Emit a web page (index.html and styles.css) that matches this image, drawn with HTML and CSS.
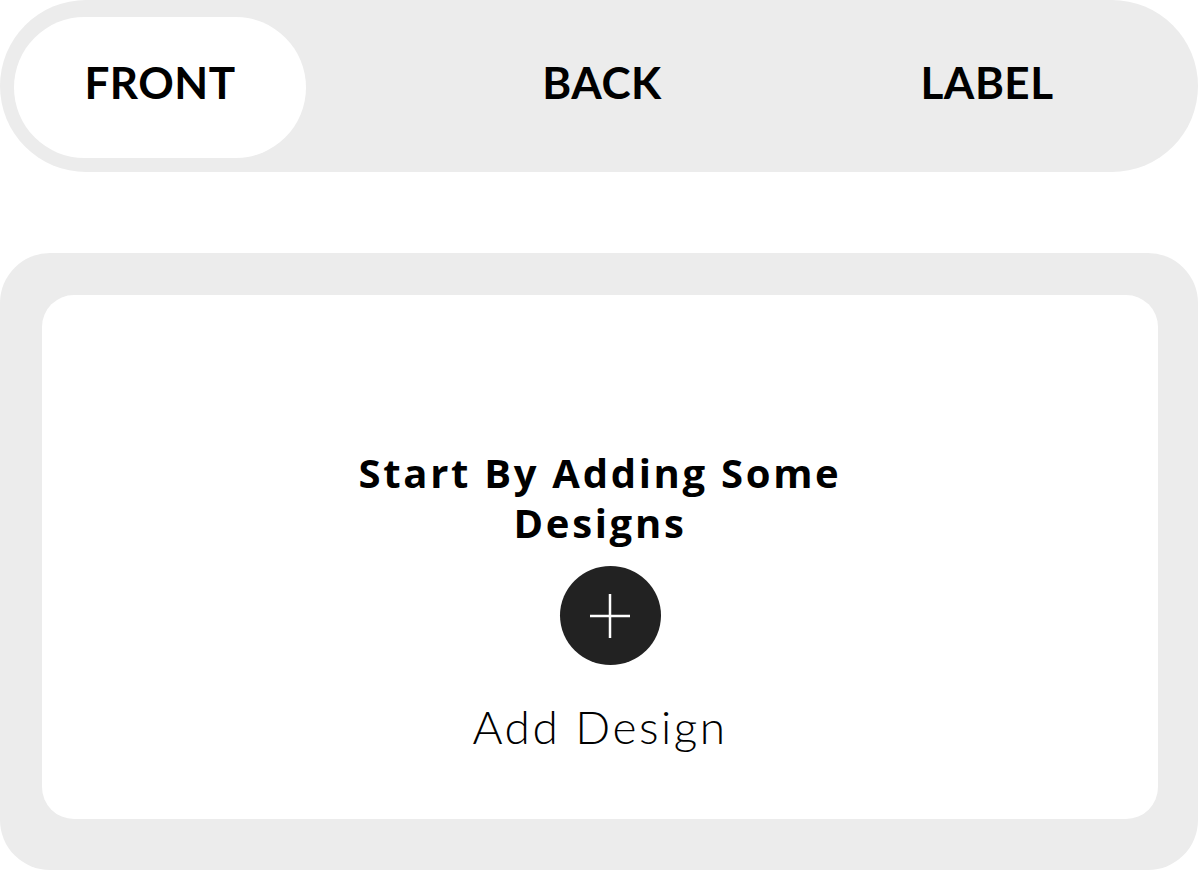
FILE: index.html
```html
<!DOCTYPE html>
<html lang="en">
<head>
<meta charset="utf-8">
<title>Designs</title>
<link rel="stylesheet" href="styles.css">
</head>
<body>
<div class="page">
  <nav class="tabs">
    <button class="tab tab-active">FRONT</button>
    <button class="tab">BACK</button>
    <button class="tab">LABEL</button>
  </nav>
  <section class="card">
    <div class="card-inner">
      <h2 class="title">Start By Adding Some Designs</h2>
      <button class="add-btn" aria-label="Add design">
        <svg width="42" height="48" viewBox="0 0 42 48" aria-hidden="true">
          <line x1="21" y1="2" x2="21" y2="46" stroke="#fff" stroke-width="2.5"/>
          <line x1="1" y1="24" x2="41" y2="24" stroke="#fff" stroke-width="2.5"/>
        </svg>
      </button>
      <div class="add-label">Add Design</div>
    </div>
  </section>
</div>
</body>
</html>
```

FILE: styles.css
```css
* { box-sizing: border-box; }
html, body { margin: 0; padding: 0; background: #fff; }
body {
  font-family: Lato, "Open Sans", "Liberation Sans", sans-serif;
  color: #000;
  width: 1200px;
  height: 872px;
  overflow: hidden;
}
.page {
  display: flex;
  flex-direction: column;
  gap: 81px;
  width: 1198px;
}
.tabs {
  height: 172px;
  background: #ececec;
  border-radius: 86px;
  padding: 17px 14px 14px;
  display: grid;
  grid-template-columns: 292px 592px 178px;
  align-items: stretch;
}
.tab {
  border: 0;
  background: transparent;
  font-family: inherit;
  font-size: 44px;
  font-weight: 700;
  letter-spacing: 0.5px;
  color: #000;
  border-radius: 72px;
  padding: 0 0 12px;
  display: flex;
  align-items: center;
  justify-content: center;
}
.tab-active { background: #fff; }
.card {
  background: #ececec;
  border-radius: 50px;
  padding: 42px 40px 51px 42px;
  height: 617px;
}
.card-inner {
  background: #fff;
  border-radius: 32px;
  height: 100%;
  display: flex;
  flex-direction: column;
  align-items: center;
  padding-top: 153px;
}
.title {
  margin: 0;
  max-width: 560px;
  text-align: center;
  font-family: "Open Sans", Lato, sans-serif;
  font-size: 40px;
  line-height: 50px;
  font-weight: 700;
  letter-spacing: 2.7px;
}
.add-btn {
  margin-top: 18px;
  margin-left: 20px;
  width: 101px;
  height: 99px;
  border-radius: 50%;
  background: #222;
  border: 0;
  padding: 0;
  display: flex;
  align-items: center;
  justify-content: center;
}
.add-label {
  margin-top: 34px;
  font-size: 46px;
  font-weight: 300;
  line-height: 55px;
  letter-spacing: 2.5px;
}
```
